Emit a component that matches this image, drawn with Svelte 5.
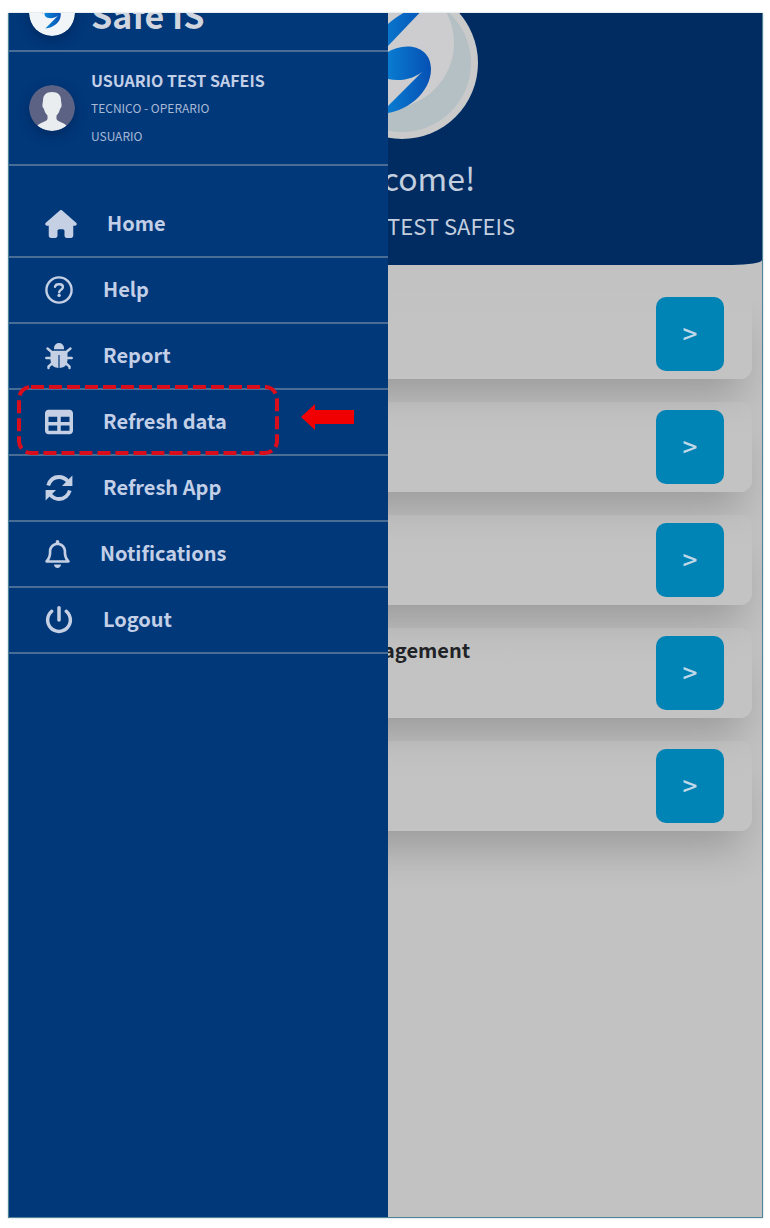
<script lang="ts">
  const menu = [
    { id: 'home', label: 'Home' },
    { id: 'help', label: 'Help' },
    { id: 'report', label: 'Report' },
    { id: 'data', label: 'Refresh data', marked: true },
    { id: 'app', label: 'Refresh App' },
    { id: 'notifications', label: 'Notifications' },
    { id: 'logout', label: 'Logout' }
  ];

  const cards = ['', '', '', 'Management', ''];
</script>

{#snippet swoosh(id: string)}
  <defs>
    <linearGradient {id} x1="0" y1="0" x2="1" y2="0">
      <stop offset="0" stop-color="#0a86d8" />
      <stop offset="1" stop-color="#0650b4" />
    </linearGradient>
  </defs>
  <path fill="url(#{id})" d="M102 17C86 20 72 28 62 37C48 50 42 64 44 80C47 70 54 67 62 59Z" />
  <path
    fill="url(#{id})"
    d="M54 127L99 82C90 92 74 95 62 92C48 88 48 75 60 66C78 54 105 58 105 82C105 106 80 126 54 127Z"
  />
{/snippet}

{#snippet icon(id: string)}
  {#if id === 'home'}
    <svg class="icon wide" viewBox="0 0 576 512" aria-hidden="true">
      <path d="M575.8 255.5c0 18-15 32.1-32 32.1h-32l.7 160.2c0 2.7-.2 5.4-.5 8.1V472c0 22.1-17.9 40-40 40H392c-22.1 0-40-17.9-40-40V384c0-17.7-14.3-32-32-32H256c-17.7 0-32 14.3-32 32v88c0 22.1-17.9 40-40 40H104c-22.1 0-40-17.9-40-40V287.6H32c-18 0-32-14-32-32.1c0-9 3-17 10-24L266.4 8c7-7 15-8 22-8s15 2 21 7L564.8 231.5c8 7 12 15 11 24z" />
    </svg>
  {:else if id === 'help'}
    <svg class="icon line" viewBox="0 0 28 28" aria-hidden="true">
      <circle cx="14" cy="14" r="12.6" />
      <path d="M10 10.8c.4-1.6 1.5-2.5 3.6-2.5h1c2 0 3.3 1.2 3.3 2.9 0 2.4-3.7 2.6-3.7 5" />
      <circle class="solid" cx="14.1" cy="19.4" r="1.7" />
    </svg>
  {:else if id === 'report'}
    <svg class="icon line" viewBox="0 0 28 28" aria-hidden="true">
      <path class="solid" d="M9 7.2V6a5 5 0 0 1 10 0v1.2z" />
      <path d="M2.5 6.5L7 10.2M25.5 6.5L21 10.2M1.3 16H7M26.7 16H21M3.5 26V24.5L8 20.5M24.5 26V24.5L20 20.5" />
      <path class="solid" d="M5.5 11.5Q5.5 8.8 8 8.8H20Q22.5 8.8 22.5 11.5V18Q22.5 25 14.6 26V13H13.4V26Q5.5 25 5.5 18z" />
    </svg>
  {:else if id === 'data'}
    <svg class="icon" viewBox="0 0 512 512" aria-hidden="true">
      <path d="M64 256V160H224v96H64zm0 64H224v96H64V320zm224 96V320H448v96H288zM448 256H288V160H448v96zM64 32C28.7 32 0 60.7 0 96V416c0 35.3 28.7 64 64 64H448c35.3 0 64-28.7 64-64V96c0-35.3-28.7-64-64-64H64z" />
    </svg>
  {:else if id === 'app'}
    <svg class="icon line" viewBox="0 0 28 28" aria-hidden="true">
      <path class="thick" d="M3.2 11.5C5 6 9 3 14 3c3.6 0 6.4 1.5 8.8 4.4M24.8 16.5C23 22 19 25 14 25c-3.6 0-6.4-1.5-8.8-4.4" />
      <path class="solid" d="M27.4 1.6v10.3H17zM.6 26.4V16.1H11z" />
    </svg>
  {:else if id === 'notifications'}
    <svg class="icon narrow" viewBox="0 0 448 512" aria-hidden="true">
      <path d="M224 0c-17.7 0-32 14.3-32 32V51.2C119 66 64 130.6 64 208v25.4c0 45.4-15.5 89.5-43.8 124.9L5.3 377c-5.8 7.2-6.9 17.1-2.9 25.4S14.8 416 24 416H424c9.2 0 17.6-5.3 21.6-13.6s2.9-18.2-2.9-25.4l-14.9-18.6C399.5 322.9 384 278.8 384 233.4V208c0-77.4-55-142-128-156.8V32c0-17.7-14.3-32-32-32zm0 96c61.9 0 112 50.1 112 112v25.4c0 47.9 13.9 94.6 39.7 134.6H72.3C98.1 328 112 281.3 112 233.4V208c0-61.9 50.1-112 112-112zm64 352H160c0 17 6.7 33.3 18.7 45.3s28.3 18.7 45.3 18.7s33.3-6.7 45.3-18.7s18.7-28.3 18.7-45.3z" />
    </svg>
  {:else}
    <svg class="icon" viewBox="0 0 512 512" aria-hidden="true">
      <path d="M288 32c0-17.7-14.3-32-32-32s-32 14.3-32 32V256c0 17.7 14.3 32 32 32s32-14.3 32-32V32zM143.5 120.6c13.6-11.3 15.4-31.5 4.1-45.1s-31.5-15.4-45.1-4.1C49.7 115.4 16 181.8 16 256c0 132.5 107.5 240 240 240s240-107.5 240-240c0-74.2-33.8-140.6-86.6-184.6c-13.6-11.3-33.8-9.4-45.1 4.1s-9.4 33.8 4.1 45.1c38.9 32.3 63.5 81 63.5 135.4c0 97.2-78.8 176-176 176s-176-78.8-176-176c0-54.4 24.7-103.1 63.5-135.4z" />
    </svg>
  {/if}
{/snippet}

<div class="page">
  <div class="frame">
    <main>
      <header class="hero">
        <svg class="hero-logo" viewBox="0 0 152 152" aria-hidden="true">
          <defs>
            <clipPath id="disc-clip"><circle cx="76" cy="76" r="69" /></clipPath>
          </defs>
          <circle cx="76" cy="76" r="76" fill="#cacaca" />
          <g clip-path="url(#disc-clip)">
            <rect width="152" height="152" fill="#b5c0c4" />
            <ellipse cx="60" cy="56" rx="68" ry="66" fill="#cdcdcf" />
          </g>
          {@render swoosh('hero-blue')}
        </svg>
        <h1>Welcome!</h1>
        <p>USUARIO TEST SAFEIS</p>
      </header>

      <div class="cards">
        {#each cards as title}
          <section class="card">
            <h2>{title}</h2>
            <button type="button" aria-label="Open {title}">&gt;</button>
          </section>
        {/each}
      </div>
    </main>

    <aside class="drawer">
      <div class="brand">
        <svg class="round" viewBox="0 0 152 152" aria-hidden="true">
          <circle cx="76" cy="76" r="76" fill="#f1f5f8" />
          {@render swoosh('brand-blue')}
        </svg>
        <strong>Safe IS</strong>
      </div>

      <div class="profile">
        <svg class="round" viewBox="0 0 46 46" aria-hidden="true">
          <defs>
            <clipPath id="avatar-clip"><circle cx="23" cy="23" r="23" /></clipPath>
          </defs>
          <g clip-path="url(#avatar-clip)">
            <rect width="46" height="46" fill="#5b6283" />
            <path
              fill="#e9edef"
              d="M23 7C17 7 14 10 14 15.5L13.5 19C13 21 14 23 15 24C15.5 27 17 29 18.5 30.5V34C17 37.500 10 37 7.500 42V46H38.500V42C36 37 29 37.500 27.500 34V30.500C29 29 30.500 27 31 24C32 23 33 21 32.500 19L32 15.500C32 10 29 7 23 7Z"
            />
          </g>
        </svg>
        <div>
          <strong>USUARIO TEST SAFEIS</strong>
          <p>TECNICO - OPERARIO</p>
          <p>USUARIO</p>
        </div>
      </div>

      <nav>
        {#each menu as item}
          <a href="#{item.id}">
            {@render icon(item.id)}
            <span>{item.label}</span>
            {#if item.marked}
              <svg class="outline" viewBox="0 0 262 70" aria-hidden="true">
                <rect x="2" y="2" width="258" height="66" rx="12" />
              </svg>
              <svg class="arrow" viewBox="0 0 53 26" aria-hidden="true">
                <path d="M0 13L14 0V6H53V20H14V26Z" />
              </svg>
            {/if}
          </a>
        {/each}
      </nav>
    </aside>
  </div>
</div>

<style>
  :global(body) {
    background: #fff;
  }

  .page {
    box-sizing: border-box;
    display: flex;
    min-height: 100vh;
    padding: 13px 7px 10px 8px;
    font-family: 'Noto Sans CJK SC', 'Open Sans', sans-serif;
  }

  .frame {
    position: relative;
    flex: 1;
    overflow: hidden;
    border: 1px solid #4d8299;
    border-top: 0;
    background: #c2c2c2;
    box-shadow: 0 0 2px #b8c8d0;
  }

  h1,
  h2,
  p {
    margin: 0;
    font-weight: 400;
  }

  .hero {
    box-sizing: border-box;
    display: flex;
    flex-direction: column;
    align-items: center;
    height: 252px;
    padding-left: 32px;
    border-radius: 0 0 30px 30px / 0 0 5px 5px;
    background: #002c62;
    color: #c3cede;
  }

  .hero-logo {
    flex: none;
    width: 152px;
    height: 152px;
    margin-top: -26px;
  }

  h1 {
    margin-top: 14px;
    font-size: 32px;
    line-height: 48px;
  }

  .hero p {
    font-size: 22px;
    line-height: 48px;
  }

  .cards {
    display: grid;
    gap: 23px;
    padding: 24px 10px;
  }

  .card {
    display: flex;
    justify-content: space-between;
    padding: 8px 28px 8px 0;
    border-radius: 12px;
    background: linear-gradient(rgb(195 195 195 / 0.4), #c3c3c3 80%);
    box-shadow: 0 28px 40px -10px rgb(0 0 0 / 0.2);
  }

  h2 {
    width: 64%;
    color: #1f2226;
    font-size: 20px;
    font-weight: 700;
    line-height: 28px;
    text-align: right;
  }

  button {
    width: 68px;
    height: 74px;
    padding: 0 0 4px;
    border: 0;
    border-radius: 10px;
    background: #0083b5;
    color: #c0d8e8;
    font: 500 26px 'Noto Sans CJK SC', sans-serif;
  }

  .drawer {
    position: absolute;
    inset: 0 calc(50% - 2px) 0 0;
    background: #00387a;
    color: #c3cfe6;
  }

  .brand,
  .profile {
    display: flex;
    gap: 16px;
    padding-left: 20px;
    border-bottom: 2px solid #4a6d96;
  }

  .brand {
    align-items: flex-end;
    height: 23px;
    padding-bottom: 14px;
    overflow: hidden;
  }

  .brand strong {
    color: #d0d5de;
    font-size: 34px;
    line-height: 42px;
  }

  .round {
    flex: none;
    width: 46px;
    height: 46px;
    border-radius: 50%;
    box-shadow: 0 4px 12px rgb(0 20 60 / 0.4);
  }

  .profile {
    align-items: center;
    height: 112px;
  }

  .profile strong {
    font-size: 16px;
    line-height: 28px;
  }

  .profile p {
    color: #a9bad6;
    font-size: 12px;
    line-height: 28px;
  }

  nav {
    padding-top: 26px;
  }

  nav a {
    position: relative;
    display: flex;
    align-items: center;
    gap: 30px;
    height: 64px;
    padding-left: 36px;
    border-bottom: 2px solid #4a6d96;
    color: inherit;
    font-size: 20px;
    font-weight: 700;
    line-height: 28px;
    text-decoration: none;
  }

  nav span {
    padding-bottom: 2px;
  }

  .icon {
    width: 28px;
    height: 28px;
    fill: #c5d0e4;
  }

  .icon.wide {
    width: 32px;
  }

  .icon.narrow {
    width: 25px;
  }

  .icon.line {
    fill: none;
    stroke: #c5d0e4;
    stroke-width: 2.4;
    stroke-linecap: round;
  }

  .line .thick {
    stroke-width: 3.8;
    stroke-linecap: butt;
  }

  .line .solid {
    fill: #c5d0e4;
    stroke: none;
  }

  .outline {
    position: absolute;
    top: -5px;
    left: 8px;
    width: 262px;
    height: 70px;
    fill: none;
    stroke: #d90d1c;
    stroke-width: 4;
    stroke-dasharray: 13 5;
  }

  .arrow {
    position: absolute;
    top: 14px;
    left: 292px;
    width: 53px;
    height: 26px;
    fill: #f00000;
  }
</style>
